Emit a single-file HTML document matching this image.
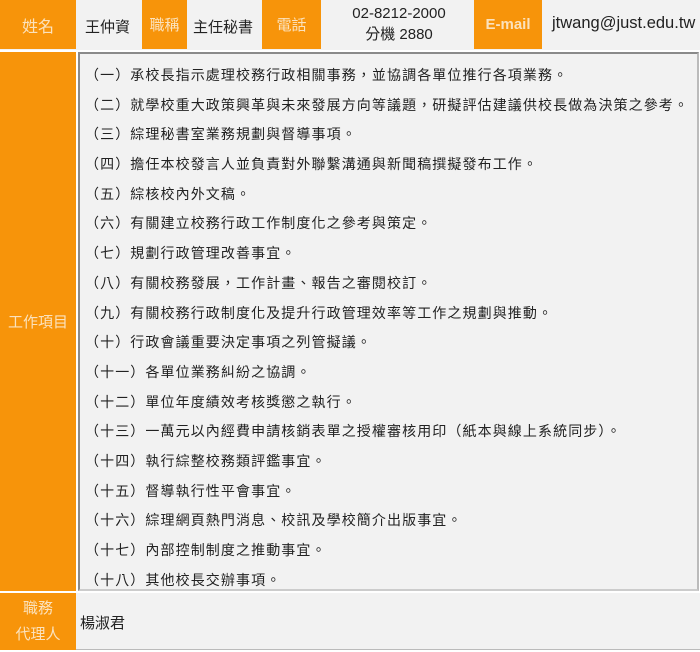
<!DOCTYPE html>
<html><head><meta charset="utf-8"><style>
body{margin:0;width:700px;height:652px;background:#fff;font-family:"Liberation Sans","Noto Sans CJK TC",sans-serif;font-size:14px;color:#222;position:relative;overflow:hidden}
.a{position:absolute;box-sizing:border-box}
.o{background:#f7940a;color:#fbe2bd;display:flex;align-items:center;justify-content:center;text-align:center}
.g{background:#f2f2f2;display:flex;align-items:center}
.box{left:78px;top:52px;width:621px;height:539px;border:2px solid #8a8a8a;border-right-color:#bbb;border-bottom-color:#ccc;background:#f2f2f2;padding:7px 0 0 5px}
.box div{height:29.7px;line-height:29.7px;white-space:nowrap;letter-spacing:1.1px}
</style></head><body>
<div class="a g" style="left:0;top:0;width:700px;height:50px"></div>
<div class="a o" style="left:0;top:0;width:76px;height:49px;font-size:16px">姓名</div>
<div class="a" style="left:85px;top:16px;font-size:15px">王仲資</div>
<div class="a o" style="left:142px;top:0;width:45px;height:49px;font-size:15px">職稱</div>
<div class="a" style="left:193px;top:16px;font-size:15px">主任秘書</div>
<div class="a o" style="left:262px;top:0;width:59px;height:49px;font-size:15px">電話</div>
<div class="a" style="left:330px;top:3px;width:138px;text-align:center;line-height:21px;font-size:15px">02-8212-2000<br>分機 2880</div>
<div class="a o" style="left:474px;top:0;width:68px;height:49px;font-weight:bold;font-size:15px">E-mail</div>
<div class="a" style="left:552px;top:14px;font-size:16.5px">jtwang@just.edu.tw</div>
<div class="a o" style="left:0;top:52px;width:76px;height:539px;font-size:15px">工作項目</div>
<div class="a box">
<div>（一）承校長指示處理校務行政相關事務，並協調各單位推行各項業務。</div>
<div>（二）就學校重大政策興革與未來發展方向等議題，研擬評估建議供校長做為決策之參考。</div>
<div>（三）綜理秘書室業務規劃與督導事項。</div>
<div>（四）擔任本校發言人並負責對外聯繫溝通與新聞稿撰擬發布工作。</div>
<div>（五）綜核校內外文稿。</div>
<div>（六）有關建立校務行政工作制度化之參考與策定。</div>
<div>（七）規劃行政管理改善事宜。</div>
<div>（八）有關校務發展，工作計畫、報告之審閱校訂。</div>
<div>（九）有關校務行政制度化及提升行政管理效率等工作之規劃與推動。</div>
<div>（十）行政會議重要決定事項之列管擬議。</div>
<div>（十一）各單位業務糾紛之協調。</div>
<div>（十二）單位年度績效考核獎懲之執行。</div>
<div>（十三）一萬元以內經費申請核銷表單之授權審核用印（紙本與線上系統同步）。</div>
<div>（十四）執行綜整校務類評鑑事宜。</div>
<div>（十五）督導執行性平會事宜。</div>
<div>（十六）綜理網頁熱門消息、校訊及學校簡介出版事宜。</div>
<div>（十七）內部控制制度之推動事宜。</div>
<div>（十八）其他校長交辦事項。</div>
</div>
<div class="a g" style="left:0;top:593px;width:700px;height:57px;border-bottom:1px solid #bbb"></div>
<div class="a o" style="left:0;top:593px;width:76px;height:57px;line-height:26px;font-size:15px">職務<br>代理人</div>
<div class="a" style="left:80px;top:612px;font-size:15px">楊淑君</div>
</body></html>
